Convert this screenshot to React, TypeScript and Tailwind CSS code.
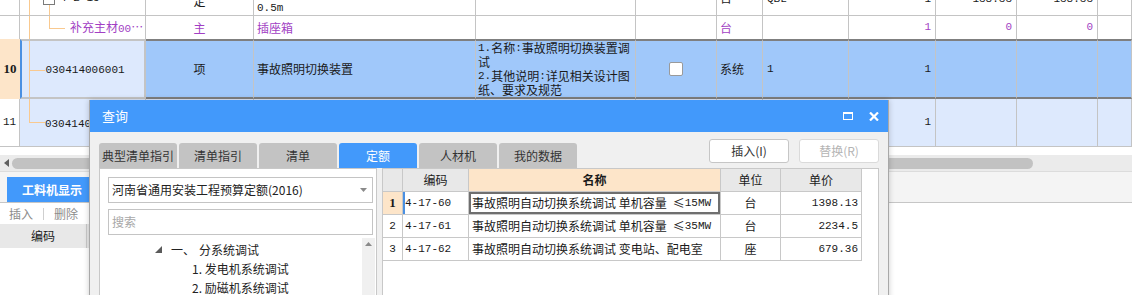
import React from 'react';

const GRID =
  'grid grid-cols-[20px_126px_108px_222px_160px_81px_46px_86px_87px_81px_81px_34px]';
const MONO = "font-['Liberation_Mono',monospace] text-[11px]";
const LINE = 'bg-[#f9c98f]';

const Cell = ({ className = '', children }: { className?: string; children?: React.ReactNode }) => (
  <div className={`relative flex items-center overflow-hidden whitespace-nowrap border-r border-[#c4c4c4] ${className}`}>
    {children}
  </div>
);

const N = ({ children }: { children: React.ReactNode }) => <span className={MONO}>{children}</span>;

const descLines: React.ReactNode[] = [
  <>
    <N>1.</N>名称<N>:</N>事故照明切换装置调
  </>,
  '试',
  <>
    <N>2.</N>其他说明<N>:</N>详见相关设计图
  </>,
  '纸、要求及规范',
];

const MainTable = () => (
  <div className="h-[147px] overflow-hidden">
    {/* partial row, cut at the top */}
    <div className={`${GRID} h-[16px] border-b border-[#c4c4c4]`}>
      <Cell />
      <Cell>
        <span className={`absolute left-[9px] top-0 bottom-0 w-px ${LINE}`} />
        <span className={`absolute left-[29px] top-[5px] bottom-0 w-px ${LINE}`} />
        <span className="absolute left-[23px] -top-[7px] h-[12px] w-[12px] border border-[#7a7a7a] bg-white" />
        <span className="absolute left-[40px] -top-[12px] leading-[16px]">
          <N>4-2-15</N>
        </span>
      </Cell>
      <Cell className="justify-center">
        <span className="-translate-y-[7px]">定</span>
      </Cell>
      <Cell className="pl-[3px]">
        <span className="translate-y-[-1px]">
          <N>0.5m</N>
        </span>
      </Cell>
      <Cell />
      <Cell />
      <Cell className="pl-[3px]">
        <span className="-translate-y-[10px]">台</span>
      </Cell>
      <Cell className="pl-[4px]">
        <span className="-translate-y-[10px]">
          <N>QBL</N>
        </span>
      </Cell>
      <Cell className="justify-end pr-[4px]">
        <span className="-translate-y-[10px]">
          <N>1</N>
        </span>
      </Cell>
      <Cell className="justify-end pr-[4px]">
        <span className="-translate-y-[10px]">
          <N>138.33</N>
        </span>
      </Cell>
      <Cell className="justify-end pr-[4px]">
        <span className="-translate-y-[10px]">
          <N>138.33</N>
        </span>
      </Cell>
      <Cell />
    </div>

    {/* 补充主材 row */}
    <div className={`${GRID} h-[23px] text-[#a23fc4]`}>
      <Cell />
      <Cell>
        <span className={`absolute left-[9px] top-0 bottom-0 w-px ${LINE}`} />
        <span className={`absolute left-[29px] top-0 h-[12px] w-px ${LINE}`} />
        <span className={`absolute left-[29px] top-[12px] h-px w-[16px] ${LINE}`} />
        <span className="ml-[50px]">
          补充主材<N>00</N>…
        </span>
      </Cell>
      <Cell className="justify-center">主</Cell>
      <Cell className="pl-[3px]">插座箱</Cell>
      <Cell />
      <Cell />
      <Cell className="pl-[3px]">台</Cell>
      <Cell />
      <Cell className="justify-end pr-[4px]">
        <N>1</N>
      </Cell>
      <Cell className="justify-end pr-[4px]">
        <N>0</N>
      </Cell>
      <Cell className="justify-end pr-[4px]">
        <N>0</N>
      </Cell>
      <Cell />
    </div>

    {/* row 10, selected */}
    <div className={`${GRID} h-[60px] bg-[#a0c8fa]`}>
      <div className="flex items-center justify-center bg-[#fde5c9] font-['Liberation_Serif',serif] text-[13px] font-bold">
        10
      </div>
      <Cell className="justify-center border-y-2 border-l-2 border-r-2 border-[#7f7f7f] border-l-[#4a90e2] bg-[#dde9fd]">
        <span className={`absolute left-[7px] -top-[2px] -bottom-[2px] w-px ${LINE}`} />
        <span className={`absolute left-[7px] top-[29px] h-px w-[16px] ${LINE}`} />
        <span className="ml-[4px]">
          <N>030414006001</N>
        </span>
      </Cell>
      <Cell className="justify-center border-y-2 border-y-[#7f7f7f]">项</Cell>
      <Cell className="border-y-2 border-y-[#7f7f7f] pl-[3px]">事故照明切换装置</Cell>
      <Cell className="border-y-2 border-y-[#7f7f7f] pl-[2px]">
        <div className="flex flex-col">
          {descLines.map((l, i) => (
            <div key={i} className="flex h-[14px] items-center leading-none">
              {l}
            </div>
          ))}
        </div>
      </Cell>
      <Cell className="justify-center border-y-2 border-y-[#7f7f7f]">
        <span className="h-[14px] w-[14px] rounded-[2px] border border-[#9a9a9a] bg-white" />
      </Cell>
      <Cell className="border-y-2 border-y-[#7f7f7f] pl-[3px]">系统</Cell>
      <Cell className="border-y-2 border-y-[#7f7f7f] pl-[4px]">
        <N>1</N>
      </Cell>
      <Cell className="justify-end border-y-2 border-y-[#7f7f7f] pr-[4px]">
        <N>1</N>
      </Cell>
      <Cell className="border-y-2 border-y-[#7f7f7f]" />
      <Cell className="border-y-2 border-y-[#7f7f7f]" />
      <Cell className="border-y-2 border-y-[#7f7f7f]" />
    </div>

    {/* row 11 */}
    <div className={`${GRID} h-[48px] border-b border-[#c4c4c4] bg-[#dde9fd]`}>
      <Cell className="justify-center bg-white">
        <N>11</N>
      </Cell>
      <Cell className="justify-center">
        <span className={`absolute left-[9px] top-0 h-[23px] w-px ${LINE}`} />
        <span className={`absolute left-[9px] top-[23px] h-px w-[16px] ${LINE}`} />
        <span className="ml-[4px]">
          <N>030414006001</N>
        </span>
      </Cell>
      <Cell />
      <Cell />
      <Cell />
      <Cell />
      <Cell />
      <Cell />
      <Cell className="justify-end pr-[4px]">
        <N>1</N>
      </Cell>
      <Cell />
      <Cell />
      <Cell />
    </div>
  </div>
);

const LowerPane = () => (
  <div>
    <div className="h-[8px]" />
    <div className="flex h-[16px] items-center bg-[#ebebeb]">
      <svg width="5" height="8" viewBox="0 0 5 8" className="ml-[4px]">
        <polygon points="5,0 5,8 0,4" fill="#606060" />
      </svg>
      <div className="ml-[3px] h-[11px] w-[1021px] rounded-full bg-[#c2c2c2]" />
    </div>
    <div className="h-[32px] border-y border-t-[#dcdcdc] border-b-[#c6c6c6] bg-[#f4f4f4] pl-[7px] pt-[5px]">
      <div className="flex h-[25px] w-[110px] items-center bg-[#4299fb] pl-[15px] text-[12px] font-bold text-white">
        工料机显示
      </div>
    </div>
    <div className="flex h-[21px] items-center pl-[9px] text-[12px] text-[#8c8c8c]">
      <span>插入</span>
      <span className="mx-[10px] h-[12px] w-px bg-[#cfcfcf]" />
      <span>删除</span>
    </div>
    <div className="flex h-[24px] w-[300px] bg-[#e8e8e8] text-[12px]">
      <div className="flex w-[87px] items-center justify-center border-r border-[#c8c8c8]">编码</div>
    </div>
  </div>
);

const tabs = ['典型清单指引', '清单指引', '清单', '定额', '人材机', '我的数据'];

const quotaRows = [
  { no: '1', code: '4-17-60', name: '事故照明自动切换系统调试 单机容量\u2002≤', tail: '15MW', unit: '台', price: '1398.13' },
  { no: '2', code: '4-17-61', name: '事故照明自动切换系统调试 单机容量\u2002≤', tail: '35MW', unit: '台', price: '2234.5' },
  { no: '3', code: '4-17-62', name: '事故照明自动切换系统调试 变电站、配电室', tail: '', unit: '座', price: '679.36' },
];

const QGRID = 'grid grid-cols-[20px_66px_252px_60px_81px] w-[479px]';

const QueryDialog = () => (
  <div className="absolute left-[89px] top-[100px] flex h-[230px] w-[800px] flex-col border-x border-b border-[#a8a8a8] bg-[#f0f0f0] shadow-[0_0_6px_rgba(0,0,0,0.2)]">
    <div className="flex h-[32px] shrink-0 items-center bg-[#4299fb] pl-[12px] pr-[9px] text-[13px] text-white">
      <span>查询</span>
      <div className="ml-auto flex items-center gap-[16px]">
        <span className="h-[8px] w-[10px] border-[1.5px] border-t-[2.5px] border-white" />
        <svg width="10" height="9" viewBox="0 0 10 9">
          <path d="M1 0.5 L9 8.5 M9 0.5 L1 8.5" stroke="white" strokeWidth="2.2" />
        </svg>
      </div>
    </div>

    <div className="mt-[7px] flex h-[29px] shrink-0 px-[9px]">
      <div className="flex items-end gap-[2px]">
        {tabs.map((t) => (
          <div
            key={t}
            className={`flex h-[25px] w-[78px] items-center justify-center rounded-t-[3px] text-[12px] ${
              t === '定额' ? 'bg-[#4299fb] text-white' : 'bg-[#c3c3c3] text-[#333]'
            }`}
          >
            {t}
          </div>
        ))}
      </div>
      <div className="ml-auto flex gap-[10px]">
        <button className="h-[24px] w-[80px] rounded-[3px] border border-[#c6c6c6] bg-white text-[12px] text-[#333]">
          插入(I)
        </button>
        <button className="h-[24px] w-[80px] rounded-[3px] border border-[#dadada] bg-white text-[12px] text-[#b4b4b4]">
          替换(R)
        </button>
      </div>
    </div>

    <div className="flex min-h-0 flex-1 gap-[5px] px-[9px]">
      {/* left tree panel */}
      <div className="flex w-[278px] flex-col border border-[#c8c8c8] bg-white text-[12px] text-[#222]">
        <div className="ml-[8px] mt-[8px] flex h-[26px] w-[265px] items-center border border-[#c4c4c4] pl-[3px] pr-[5px]">
          <span>河南省通用安装工程预算定额(2016)</span>
          <svg width="7" height="4" viewBox="0 0 7 4" className="ml-auto">
            <polygon points="0,0 7,0 3.5,4" fill="#8a8a8a" />
          </svg>
        </div>
        <div className="ml-[8px] mt-[6px] flex h-[26px] w-[265px] items-center border border-[#c4c4c4] pl-[3px] text-[#a8a8a8]">
          搜索
        </div>
        <div className="mt-[3px] flex flex-1">
          <div className="flex-1 pt-[2px]">
            <div className="flex h-[19px] items-center pl-[55px]">
              <svg width="7" height="7" viewBox="0 0 7 7">
                <polygon points="7,0 7,7 0,7" fill="#5a5a5a" />
              </svg>
              <span className="ml-[9px]">一、</span>
              <span className="ml-[4px]">分系统调试</span>
            </div>
            <div className="flex h-[19px] items-center pl-[92px]">1. 发电机系统调试</div>
            <div className="flex h-[19px] items-center pl-[92px]">2. 励磁机系统调试</div>
          </div>
          <div className="mr-[1px] flex w-[13px] justify-center bg-[#f0f0f0] pt-[4px]">
            <svg width="7" height="4" viewBox="0 0 7 4">
              <polygon points="0,4 7,4 3.5,0" fill="#8a8a8a" />
            </svg>
          </div>
        </div>
      </div>

      {/* right quota grid */}
      <div className="flex-1 border border-[#c8c8c8] bg-white text-[12px] text-[#1a1a1a]">
        <div className={`${QGRID} h-[23px]`}>
          {['', '编码', '名称', '单位', '单价'].map((h) => (
            <div
              key={h || 'n'}
              className={`flex items-center justify-center border-b border-r border-[#c8c8c8] ${
                h === '名称' ? 'bg-[#fde5c9] font-bold' : 'bg-[#e8e8e8]'
              }`}
            >
              {h}
            </div>
          ))}
        </div>
        {quotaRows.map((r, i) => (
          <div key={r.no} className={`${QGRID} h-[23px]`}>
            <div
              className={`flex items-center justify-center border-b border-r border-[#c8c8c8] ${
                i === 0 ? "bg-[#fde5c9] font-['Liberation_Serif',serif] text-[13px] font-bold" : MONO
              }`}
            >
              {r.no}
            </div>
            <div
              className={`flex items-center border-b border-r border-[#c8c8c8] pl-[2px] ${
                i === 0 ? 'shadow-[inset_2px_0_0_#4a90e2]' : ''
              }`}
            >
              <N>{r.code}</N>
            </div>
            <div
              className={`flex items-center overflow-hidden whitespace-nowrap border-b border-r border-[#c8c8c8] pl-[3px] ${
                i === 0 ? 'shadow-[inset_0_0_0_2px_#6f6f6f]' : ''
              }`}
            >
              {r.name}
              {r.tail && <N>{r.tail}</N>}
            </div>
            <div className="flex items-center justify-center border-b border-r border-[#c8c8c8]">{r.unit}</div>
            <div className="flex items-center justify-end border-b border-r border-[#c8c8c8] pr-[3px]">
              <N>{r.price}</N>
            </div>
          </div>
        ))}
      </div>
    </div>
  </div>
);

export default function App() {
  return (
    <div className="relative h-[295px] w-[1132px] overflow-hidden bg-white font-['Noto_Sans_CJK_SC',sans-serif] text-[12px] text-[#1a1a1a]">
      <MainTable />
      <LowerPane />
      <QueryDialog />
    </div>
  );
}
